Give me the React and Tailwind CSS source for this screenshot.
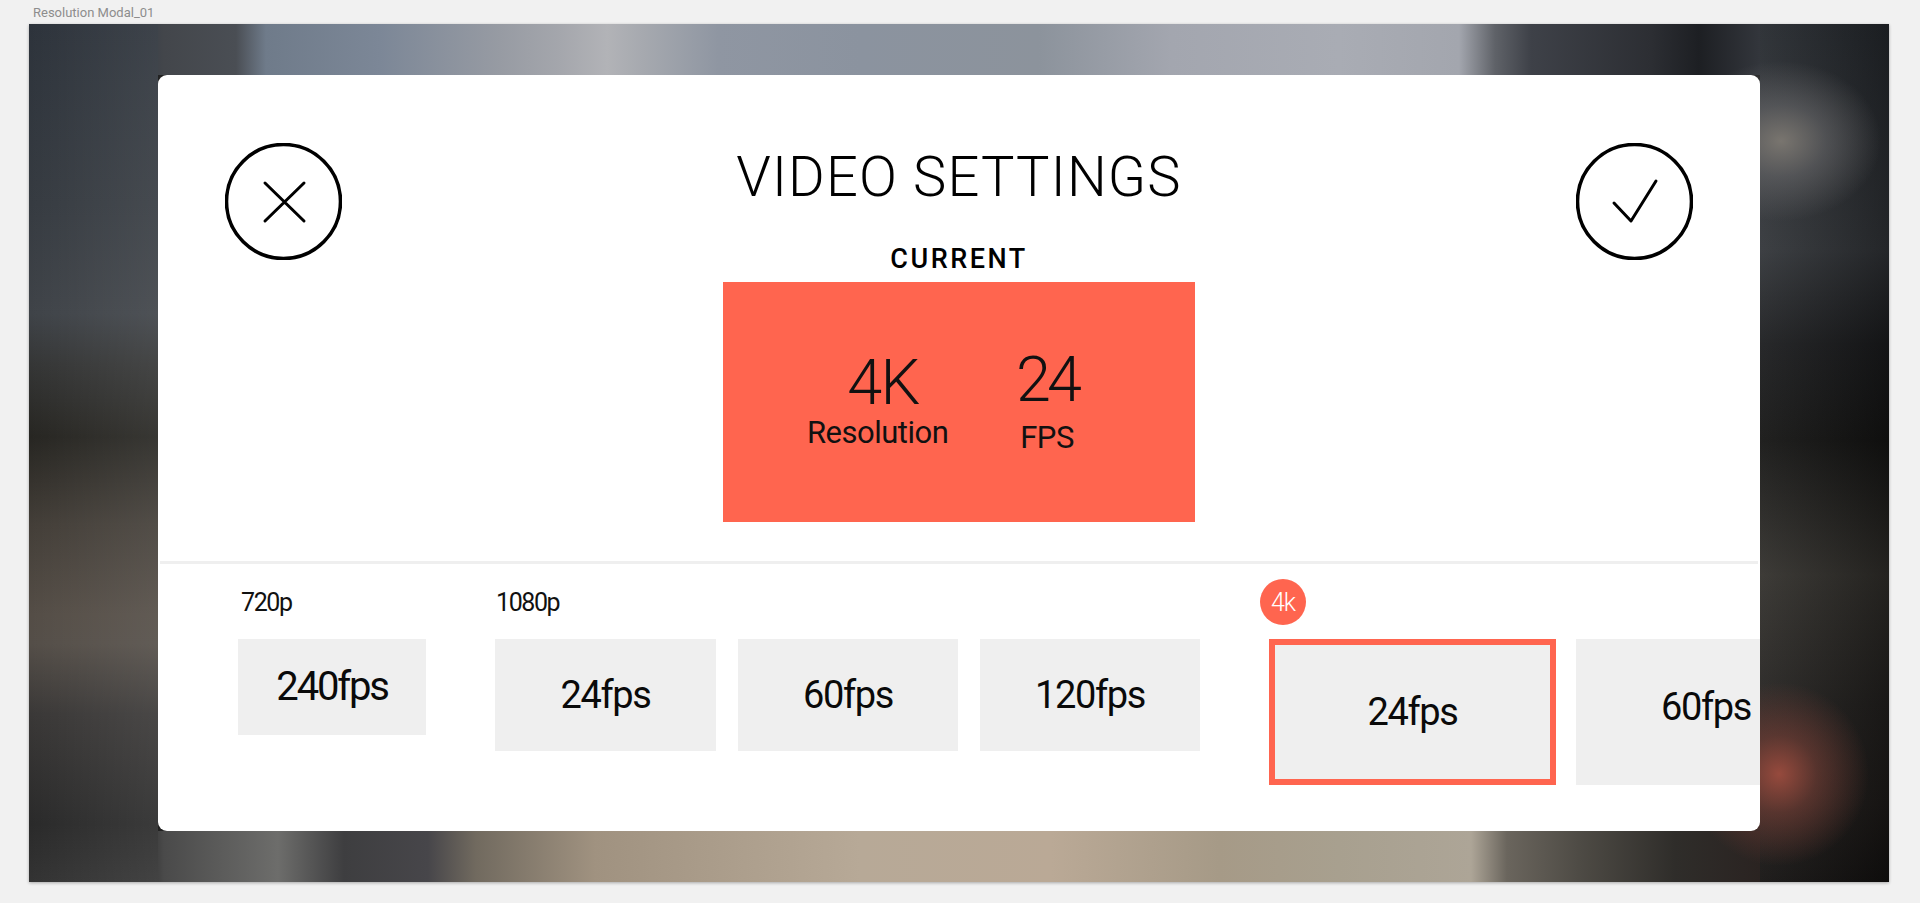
const din = "font-['Roboto',sans-serif]";

const screenBg = "[background:radial-gradient(ellipse_100px_80px_at_1752px_117px,#79756f,rgba(104,104,106,0.6)_45%,transparent),radial-gradient(ellipse_90px_92px_at_1750px_750px,#964a3d,rgba(128,66,56,0.55)_42%,transparent),linear-gradient(to_right,#40444a_0,#43464b_6px,#4a4e54_78px,#6f7b8a_108px,#7c8797_222px,#979ba3_342px,#a4a6ac_400px,#b2b3b7_449px,#a6a9af_485px,#8f96a2_560px,#8b939f_702px,#8c939c_881px,#a3a6af_1013px,#a9acb4_1181px,#a3a6ae_1301px,#5f6268_1337px,#3e4148_1373px,#2c2e33_1493px,#1d1f23_1541px,#33363c_1602px)_129px_0/1602px_51px_no-repeat,linear-gradient(to_right,#424242_0,#4a4a4a_6px,#6d6d6b_120px,#3e3e40_186px,#47464a_270px,#716a5f_318px,#a09280_437px,#b7a997_702px,#baa996_893px,#a69a87_1061px,#a8a08f_1181px,#ada597_1313px,#6a655d_1349px,#4e4b45_1421px,#2f2d2a_1517px,#2a2321_1602px)_129px_100%/1602px_51px_no-repeat,linear-gradient(to_right,transparent,rgba(255,255,255,0.08))_0_0/129px_100%_no-repeat,linear-gradient(to_right,rgba(255,255,255,0.05),rgba(0,0,0,0.3))_100%_0/129px_100%_no-repeat,linear-gradient(to_bottom,#2d333b_0,#363b41_180px,#3f4348_290px,#353636_340px,#272622_413px,#433e38_500px,#544d46_590px,#544e48_620px,#3a3837_690px,#2a2a2a_800px,#333333_858px)_0_0/129px_100%_no-repeat,linear-gradient(to_bottom,#262a2f_0,#33363a_226px,#1c1d1f_320px,#151514_416px,#33312d_551px,#242220_680px,#1f1c1a_780px,#141211_858px)_100%_0/129px_100%_no-repeat,#222]";

const Tile = ({ label, className = "", textClass = "" }) => (
    <div className={`flex shrink-0 items-center justify-center bg-[#efefef] text-[#0a0a0a] ${className}`}>
        <span className={textClass}>{label}</span>
    </div>
);

const CircleButton = ({ children }) => (
    <button className="block h-[117px] w-[117px] shrink-0">
        <svg width="117" height="117" viewBox="0 0 117 117" fill="none" stroke="#000" strokeLinecap="round" strokeLinejoin="round">
            <circle cx="58.5" cy="58.5" r="57" strokeWidth="3.6" />
            {children}
        </svg>
    </button>
);

export default function App() {
    return (
        <div className={`h-[903px] w-full overflow-hidden bg-[#f1f1f1] ${din}`}>
            <div className="h-[24px] pl-[33px] pt-[5px] text-[13px] leading-[16px] text-[#8d8d8d]">Resolution Modal_01</div>
            <div className={`ml-[29px] h-[858px] w-[1860px] pl-[129px] pt-[51px] shadow-[0_1px_3px_rgba(0,0,0,0.3)] ${screenBg}`}>
                <div className="h-[756px] w-[1602px] overflow-hidden rounded-[9px] bg-white">
                    <div className="flex items-start justify-between px-[67px] pt-[68px]">
                        <CircleButton>
                            <path d="M40 40 L79 78 M79 40 L40 78" strokeWidth="3" />
                        </CircleButton>
                        <div className="flex w-[472px] flex-col items-center text-black">
                            <h1 className="mt-[6px] text-[56px] font-light leading-[56px] tracking-[1.2px] whitespace-nowrap">VIDEO SETTINGS</h1>
                            <div className="mt-[41px] text-[27px] font-medium leading-[27px] tracking-[2.5px]">CURRENT</div>
                            <div className="mt-[9px] flex h-[240px] w-[472px] bg-[#ff654f] pl-[84px] pt-[69px] text-[#111]">
                                <div className="flex w-[139px] flex-col">
                                    <div className="pl-[13px] text-center text-[63px] font-light leading-[63px] tracking-[-1.5px]">4K</div>
                                    <div className="mt-[3px] text-center text-[31px] font-normal leading-[31px] tracking-[-0.5px] whitespace-nowrap">Resolution</div>
                                </div>
                                <div className="ml-[66px] flex w-[70px] flex-col">
                                    <div className="-mt-[3px] text-center text-[63px] font-light leading-[63px] tracking-[-4px]">24</div>
                                    <div className="mt-[11px] text-center text-[31px] font-normal leading-[31px] tracking-[-0.5px]">FPS</div>
                                </div>
                            </div>
                        </div>
                        <CircleButton>
                            <path d="M38 60 L55 78 L80 38" strokeWidth="3" />
                        </CircleButton>
                    </div>
                    <div className="mx-[2px] mt-[39px] h-[3px] bg-[#efefef]" />
                    <div className="flex items-start pl-[80px] pt-[15px]">
                        <div className="w-[257px] shrink-0">
                            <div className="h-[60px] pl-[3px] pt-[11px] text-[25px] font-normal leading-[25px] tracking-[-1.4px] text-[#111]">720p</div>
                            <Tile label="240fps" className="h-[96px] w-[188px]" textClass="text-[40px] font-normal tracking-[-2.2px]" />
                        </div>
                        <div className="w-[765px] shrink-0">
                            <div className="h-[60px] pl-[1px] pt-[11px] text-[25px] font-normal leading-[25px] tracking-[-1.4px] text-[#111]">1080p</div>
                            <div className="flex gap-[22px]">
                                <Tile label="24fps" className="h-[112px] w-[221px]" textClass="text-[38px] font-normal tracking-[-1.4px]" />
                                <Tile label="60fps" className="h-[112px] w-[220px]" textClass="text-[38px] font-normal tracking-[-1.4px]" />
                                <Tile label="120fps" className="h-[112px] w-[220px]" textClass="text-[38px] font-normal tracking-[-1.4px]" />
                            </div>
                        </div>
                        <div>
                            <div className="h-[60px]">
                                <div className="flex h-[46px] w-[46px] items-center justify-center rounded-full bg-[#ff654f] text-[25px] font-light leading-none tracking-[-1px] text-white">4k</div>
                            </div>
                            <div className="ml-[9px] flex gap-[20px]">
                                <Tile label="24fps" className="h-[146px] w-[287px] border-[6px] border-[#ff654f]" textClass="text-[38px] font-normal tracking-[-1.4px]" />
                                <Tile label="60fps" className="h-[146px] w-[260px] pb-[10px]" textClass="text-[38px] font-normal tracking-[-1.4px]" />
                            </div>
                        </div>
                    </div>
                </div>
            </div>
        </div>
    );
}
